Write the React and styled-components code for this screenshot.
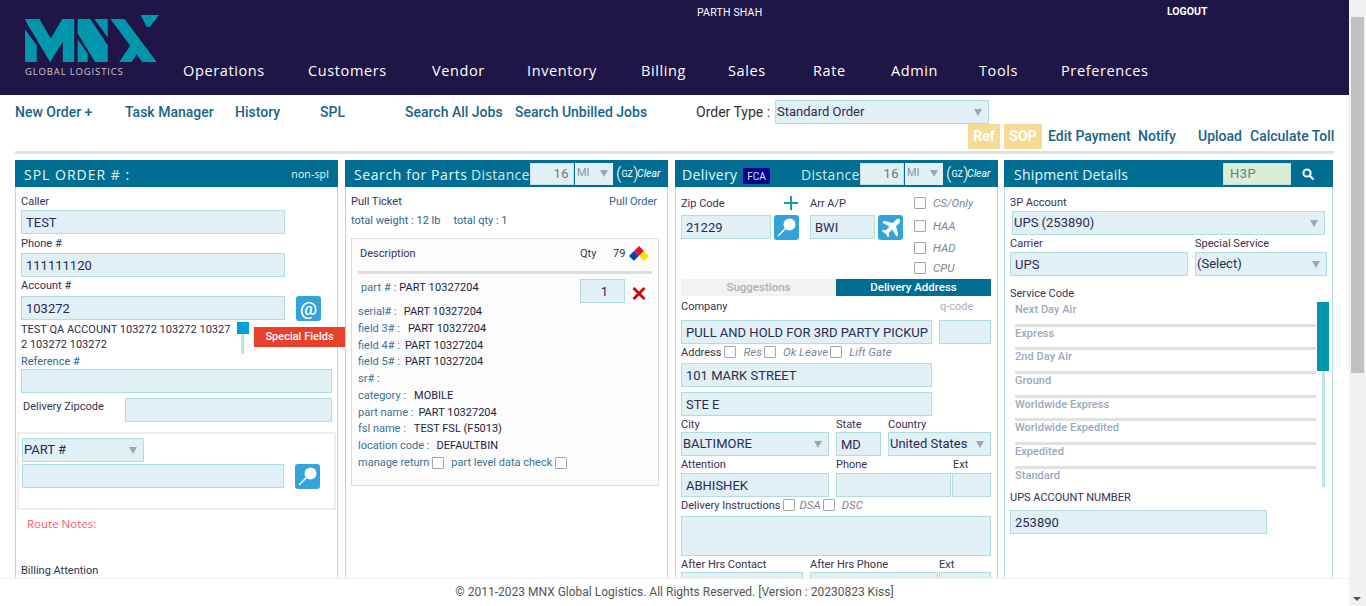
import React from "react";
import styled, { createGlobalStyle } from "styled-components";

const GlobalStyle = createGlobalStyle`
  * { box-sizing: border-box; }
  html, body { margin: 0; padding: 0; height: 606px; overflow: hidden; background: #fff; }
  body { font-family: Roboto, "Liberation Sans", sans-serif; font-size: 12px; color: #2a2a4a; }
`;

const display = `"Open Sans", Roboto, sans-serif`;
const teal = "#006e93";

const Shell = styled.div`
  display: flex;
  width: 1366px;
  height: 606px;
`;

const Page = styled.div`
  width: 1349px;
  height: 606px;
  display: flex;
  flex-direction: column;
  overflow: hidden;
`;

const ScrollBar = styled.div`
  width: 17px;
  height: 606px;
  background: #f1f1f1;
  display: flex;
  flex-direction: column;
  align-items: center;
  padding-top: 17px;
  position: relative;
  &::after {
    content: "";
    position: absolute;
    bottom: 5px;
    left: 4px;
    border-left: 4px solid transparent;
    border-right: 4px solid transparent;
    border-top: 4px solid #505050;
  }
`;

const ScrollThumb = styled.div`
  width: 13px;
  height: 356px;
  background: #c1c1c1;
`;

const Header = styled.header`
  height: 95px;
  flex: none;
  background: #201547;
  display: flex;
  padding-left: 25px;
  color: #fff;
`;

const LogoWrap = styled.div`
  width: 158px;
  padding-top: 15px;
  flex: none;
`;

const LogoCaption = styled.div`
  font-family: ${display};
  font-size: 9.5px;
  line-height: 12px;
  margin-top: 4px;
  letter-spacing: 0.85px;
  color: #c9c9d2;
  white-space: nowrap;
`;

const HeaderRight = styled.div`
  flex: 1;
  display: flex;
  flex-direction: column;
`;

const UserRow = styled.div`
  height: 61px;
  display: flex;
  padding-top: 6px;
  font-size: 10.5px;
  line-height: 12px;
`;

const UserName = styled.span`
  margin-left: 514px;
  margin-top: 1px;
  width: 470px;
  font-weight: 400;
  letter-spacing: 0.2px;
`;

const Logout = styled.span`
  font-weight: 700;
  font-size: 10.5px;
`;

const Nav = styled.nav`
  display: flex;
  font-family: ${display};
  font-size: 14.5px;
  line-height: 20px;
  letter-spacing: 0.62px;
`;

const NavItem = styled.a`
  width: ${(p) => p.$w}px;
  color: #fff;
  white-space: nowrap;
`;

const Toolbar = styled.div`
  height: 59px;
  flex: none;
  margin: 0 15px;
  display: flex;
  flex-direction: column;
`;

const ToolRow = styled.div`
  height: 29px;
  flex: none;
  display: flex;
  align-items: flex-start;
  padding-top: 5px;
`;

const ToolLink = styled.a`
  font-size: 14px;
  font-weight: 500;
  line-height: 24px;
  color: #1a6488;
  white-space: nowrap;
  width: ${(p) => (p.$w ? `${p.$w}px` : "auto")};
`;

const OrderLabel = styled.span`
  font-size: 14px;
  line-height: 24px;
  width: 79px;
  color: #333;
  white-space: nowrap;
`;

const ActionRow = styled.div`
  height: 25px;
  flex: none;
  display: flex;
  justify-content: flex-end;
  align-items: flex-start;
`;

const Tan = styled.span`
  width: ${(p) => p.$w}px;
  height: 25px;
  margin-right: ${(p) => p.$mr}px;
  background: #f5dc96;
  color: #fff;
  font-size: 14px;
  font-weight: 700;
  line-height: 25px;
  text-align: center;
`;

const Rule = styled.div`
  height: 3px;
  margin-top: 2px;
  flex: none;
  background: #e0e0e0;
  width: 1319px;
`;

const Panels = styled.main`
  flex: 1;
  min-height: 0;
  overflow: hidden;
  padding: 6px 0 0 15px;
  display: flex;
  align-items: flex-start;
`;

const Panel = styled.section`
  width: ${(p) => p.$w}px;
  margin-right: ${(p) => p.$mr}px;
  flex: none;
  height: 520px;
  border: 1px solid #b3dbe2;
  border-top: 0;
  position: relative;
`;

const PanelHead = styled.div`
  height: 27px;
  margin: 0 -1px;
  background: ${teal};
  color: #e8f6f8;
  display: flex;
  align-items: center;
  font-family: ${display};
  font-size: 14px;
  white-space: nowrap;
`;

const HeadTitle = styled.span`
  letter-spacing: ${(p) => p.$ls || 0.3}px;
  margin: 2px 0 0 ${(p) => p.$ml}px;
  width: ${(p) => p.$w}px;
  flex: none;
`;

const HeadLabel = styled.span`
  color: #cfe9e6;
  letter-spacing: 0.3px;
  margin-top: 2px;
  width: ${(p) => p.$w}px;
  flex: none;
`;

const NonSpl = styled.span`
  font-size: 10.5px;
  letter-spacing: 0.15px;
  margin-left: auto;
  margin-right: 9px;
`;

const FcaBadge = styled.span`
  width: 27px;
  height: 16px;
  margin-top: 4px;
  background: #00008b;
  color: #d5e6f5;
  font-family: Roboto, sans-serif;
  font-size: 10px;
  line-height: 17px;
  text-align: center;
  margin-right: 31px;
  flex: none;
`;

const HeadInput = styled.input`
  width: ${(p) => p.$w}px;
  height: 22px;
  flex: none;
  border: 1px solid #c4e0e6;
  background: ${(p) => p.$bg || "#e0f0f4"};
  color: #6b7786;
  font: 13px Roboto, sans-serif;
  letter-spacing: 0.4px;
  text-align: ${(p) => p.$align || "right"};
  padding: 0 ${(p) => (p.$align ? 0 : 4)}px 0 ${(p) => (p.$align ? 6 : 0)}px;
  outline: none;
`;

const HeadSelect = styled.div`
  width: 38px;
  height: 22px;
  margin-left: 1px;
  flex: none;
  background: #e0f0f4;
  color: #8a93a5;
  font: 11px/19px Roboto, sans-serif;
  padding-left: 2px;
  position: relative;
  &::after {
    content: "";
    position: absolute;
    right: 5px;
    top: 7px;
    border-left: 4.5px solid transparent;
    border-right: 4.5px solid transparent;
    border-top: 7px solid #9aa8b4;
  }
`;

const Gz = styled.span`
  margin-left: 3px;
  width: 21px;
  flex: none;
  font-size: 9px;
  color: #fff;
  font-family: Roboto, sans-serif;
  display: flex;
  align-items: center;
  justify-content: space-between;
  & b { font-weight: 300; font-size: 17px; line-height: 17px; }
`;

const ClearLink = styled.i`
  font-family: Roboto, sans-serif;
  font-size: 10.5px;
  color: #fff;
`;

const Body = styled.div`
  padding: ${(p) => p.$top || 7}px 5px 0 5px;
`;

const Label = styled.label`
  display: block;
  height: 14px;
  font-size: 11px;
  line-height: 16px;
  white-space: nowrap;
  color: ${(p) => p.$color || "#333350"};
  width: ${(p) => (p.$w ? `${p.$w}px` : "auto")};
  flex: none;
  margin-top: ${(p) => p.$mt || 0}px;
  margin-bottom: ${(p) => p.$mb || 0}px;
  margin-left: ${(p) => p.$ml || 0}px;
`;

const Input = styled.input`
  display: block;
  width: ${(p) => (p.$w ? `${p.$w}px` : "100%")};
  height: ${(p) => p.$h || 24}px;
  flex: none;
  margin-top: ${(p) => p.$mt || 0}px;
  margin-left: ${(p) => p.$ml || 0}px;
  border: 1px solid #b3dbe2;
  background: #e0f0f4;
  border-radius: 0;
  color: #2b2b55;
  font: 13px Roboto, sans-serif;
  text-align: ${(p) => p.$align || "left"};
  padding: 0 0 0 4px;
  outline: none;
`;

const Select = styled.div`
  width: ${(p) => p.$w}px;
  height: 24px;
  flex: none;
  margin-left: ${(p) => p.$ml || 0}px;
  border: 1px solid #b3dbe2;
  background: #e0f0f4;
  color: #2b2b55;
  font-size: 13px;
  line-height: 21px;
  padding-left: 1px;
  position: relative;
  white-space: nowrap;
  &::after {
    content: "";
    position: absolute;
    right: 6px;
    top: 8px;
    border-left: 4px solid transparent;
    border-right: 4px solid transparent;
    border-top: 7px solid #9aa8b4;
  }
`;

const Row = styled.div`
  display: flex;
  align-items: flex-start;
  margin-top: ${(p) => p.$mt || 0}px;
`;

const Col = styled.div`
  width: ${(p) => p.$w}px;
  flex: none;
  display: flex;
  flex-direction: column;
`;

const IconButton = styled.span`
  width: 25px;
  height: 25px;
  flex: none;
  margin-left: ${(p) => p.$ml || 0}px;
  border-radius: 3px;
  background: #33a3dc;
  color: #fff;
  display: flex;
  align-items: center;
  justify-content: center;
  font-size: 19px;
  font-weight: 500;
  line-height: 25px;
`;

const AccountNote = styled.div`
  position: relative;
  height: 30px;
  margin-top: 1px;
  width: 212px;
  font-size: 11px;
  line-height: 15px;
  word-break: break-all;
  color: #2b2b4b;
`;

const SliderThumb = styled.span`
  position: absolute;
  left: 216px;
  top: 0;
  width: 12px;
  height: 12px;
  background: #009fd9;
  &::after {
    content: "";
    position: absolute;
    left: 4px;
    top: 12px;
    width: 3px;
    height: 20px;
    background: #bde3f2;
  }
`;

const SpecialFields = styled.span`
  position: absolute;
  left: 233px;
  top: 5px;
  width: 91px;
  height: 20px;
  background: #e8402a;
  color: #fff;
  font-size: 11px;
  font-weight: 500;
  line-height: 20px;
  text-align: center;
  word-break: normal;
  z-index: 2;
`;

const PartBox = styled.div`
  margin: 10px -4px 0 -4px;
  height: 78px;
  border: 2px solid #eee;
  padding: 4px 3px;
`;

const RouteNotes = styled.div`
  color: #ff5a66;
  font-family: ${display};
  font-size: 11.5px;
  line-height: 14px;
  margin: 7px 0 0 6px;
`;

const PullLine = styled.div`
  display: flex;
  justify-content: space-between;
  height: 14px;
  font-size: 11px;
  line-height: 14px;
  color: #333350;
  margin-right: 5px;
`;

const PullLink = styled.span`
  color: #28678f;
`;

const Totals = styled.div`
  font-size: 11px;
  line-height: 14px;
  margin-top: 5px;
  color: #28678f;
  & span + span { margin-left: 13px; }
`;

const PartCard = styled.div`
  margin-top: 10px;
  margin-right: 3px;
  height: 248px;
  border: 1px solid #ddd;
  background: #fcfcfc;
  padding: 0 6px;
`;

const CardHead = styled.div`
  height: 35px;
  display: flex;
  align-items: flex-start;
  padding: 8px 0 0 2px;
  font-size: 11px;
  line-height: 14px;
  color: #333350;
  border-bottom: 3px solid #ddd;
  & svg { margin-top: -1px; }
`;

const CardCell = styled.span`
  width: ${(p) => p.$w}px;
  flex: none;
`;

const PartHead = styled.div`
  display: flex;
  align-items: flex-start;
  height: 30px;
  padding-top: 5px;
  font-size: 11px;
`;

const PartName = styled.span`
  width: 222px;
  padding: 2px 0 0 3px;
  flex: none;
  line-height: 14px;
  letter-spacing: 0.1px;
`;

const RemoveMark = styled.span`
  margin: 8px 0 0 7px;
  display: flex;
`;

const Key = styled.span`
  color: #3a7396;
  margin-left: ${(p) => p.$ml || 0}px;
`;

const Value = styled.span`
  color: #1d1d3d;
  margin-left: ${(p) => p.$ml ?? 4}px;
`;

const PartRow = styled.div`
  height: 16.75px;
  font-size: 11px;
  line-height: 16.75px;
  white-space: nowrap;
  display: flex;
  align-items: center;
`;

const Check = styled.input.attrs({ type: "checkbox", readOnly: true })`
  appearance: none;
  width: 12px;
  height: 12px;
  flex: none;
  margin: 0 0 0 ${(p) => p.$ml || 0}px;
  border: 1px solid #a5a5a5;
  border-radius: 1px;
  background: #fff;
`;

const Opt = styled.i`
  color: #7d8595;
  font-size: 11.5px;
  margin-left: ${(p) => p.$ml || 0}px;
  white-space: nowrap;
`;

const Stack = styled.div`
  display: flex;
  flex-direction: column;
  width: 78px;
  flex: none;
`;

const CheckLine = styled.div`
  display: flex;
  align-items: center;
  height: ${(p) => p.$h}px;
  margin-top: ${(p) => p.$mt || 0}px;
  & i { margin-left: 7px; }
`;

const Tabs = styled.div`
  display: grid;
  grid-template-columns: 155px 155px;
  height: 17px;
  margin-top: 2px;
`;

const Tab = styled.div`
  background: ${(p) => (p.$active ? teal : "#f2f2f2")};
  color: ${(p) => (p.$active ? "#fff" : "#aab0b8")};
  font-size: 11.5px;
  font-weight: 500;
  line-height: 17px;
  text-align: center;
`;

const InlineLine = styled.div`
  display: flex;
  align-items: center;
  height: 14px;
  font-size: 11px;
  color: #333350;
  margin-top: ${(p) => p.$mt || 0}px;
  white-space: nowrap;
`;

const ServiceList = styled.div`
  width: 301px;
  margin-left: 5px;
  padding-top: 1px;
  height: 185px;
  overflow: hidden;
`;

const ServiceItem = styled.div`
  height: 23.7px;
  border-bottom: 3px solid #e0e0e0;
  color: #9aa9c0;
  font-size: 11px;
  font-weight: 500;
  letter-spacing: 0.05px;
  line-height: 14px;
  &:last-child { border-bottom: 0; }
`;

const ListWrap = styled.div`
  position: relative;
  margin-top: 2px;
`;

const ListTrack = styled.span`
  position: absolute;
  left: 312px;
  top: 0;
  width: 3px;
  height: 185px;
  background: #bde3f2;
`;

const ListThumb = styled.span`
  position: absolute;
  left: 307px;
  top: 0;
  width: 12px;
  height: 69px;
  background: #0097ad;
`;

const SearchSlot = styled.span`
  margin-left: 11px;
  display: flex;
`;

const Footer = styled.footer`
  height: 28px;
  flex: none;
  background: #fff;
  border-top: 1px solid #eef0f4;
  text-align: center;
  font-size: 12px;
  line-height: 26px;
  color: #555;
`;

const MagnifierIcon = () => (
  <svg width="21" height="21" viewBox="0 0 21 21">
    <circle cx="13.5" cy="7.5" r="6" fill="#fff" />
    <path d="M9 12 L2.5 18.5" stroke="#fff" strokeWidth="1.5" strokeLinecap="round" />
  </svg>
);

const PlaneIcon = () => (
  <svg width="22" height="22" viewBox="0 0 24 24">
    <path
      fill="#fff"
      d="M21.5 2.5c-1-1-2.9-.7-4 .4l-3.6 3.6L4.4 4 2.5 5.9l7.9 4.7-3.9 3.9-3-.5L2 15.5l4 2.5 2.5 4 1.5-1.5-.5-3 3.9-3.9 4.7 7.9L20 19.6l-2.5-9.5 3.6-3.6c1.1-1.1 1.4-3 .4-4z"
    />
  </svg>
);

const SearchGlyph = () => (
  <svg width="12" height="12" viewBox="0 0 12 12">
    <circle cx="5" cy="5" r="3.6" fill="none" stroke="#fff" strokeWidth="2" />
    <path d="M7.8 7.8 L11 11" stroke="#fff" strokeWidth="2.2" strokeLinecap="round" />
  </svg>
);

const HazardIcon = () => (
  <svg width="20" height="20" viewBox="0 0 20 20">
    <path d="M10 0 L15 5 L10 10 L5 5 Z" fill="#e8112d" />
    <path d="M5 5 L10 10 L5 15 L0 10 Z" fill="#0047ab" />
    <path d="M15 5 L20 10 L15 15 L10 10 Z" fill="#ffe000" />
    <path d="M10 10 L15 15 L10 20 L5 15 Z" fill="#fff" stroke="#ddd" strokeWidth="0.5" />
  </svg>
);

const RedX = () => (
  <svg width="14" height="13" viewBox="0 0 14 13">
    <path d="M1.5 1 L12.5 12 M12.5 1 L1.5 12" stroke="#c40d0d" strokeWidth="2.8" />
  </svg>
);

const PlusIcon = () => (
  <svg width="14" height="14" viewBox="0 0 14 14">
    <path d="M7 0 V14 M0 7 H14" stroke="#169aa6" strokeWidth="2" />
  </svg>
);

// logo mark, coords are the 3x crop of the picture
const MnxLogo = () => (
  <svg width="134" height="47" viewBox="75 45 400 140" style={{ display: "block" }}>
    <g fill="#0097ad">
      <path d="M75 88 L110 135 V185 H75 Z" />
      <path d="M75 57 H118 L152 115 L186 57 H222 V185 H188 V125 L150 185 L82 72 Z" />
      <path d="M232 57 H270 L322 135 V185 H284 L232 100 Z" />
      <path d="M232 118 L262 160 V185 H232 Z" />
      <path d="M282 57 H322 V112 Z" />
      <path d="M330 57 H372 L468 185 H425 Z" />
      <path d="M356 185 L392 132 L412 155 L394 185 Z" />
      <path d="M420 45 H475 L448 80 H438 Z" />
    </g>
  </svg>
);

const Logo = () => (
  <LogoWrap>
    <MnxLogo />
    <LogoCaption>GLOBAL LOGISTICS</LogoCaption>
  </LogoWrap>
);

const navItems = [
  ["Operations", 125],
  ["Customers", 124],
  ["Vendor", 95],
  ["Inventory", 114],
  ["Billing", 87],
  ["Sales", 85],
  ["Rate", 78],
  ["Admin", 88],
  ["Tools", 82],
  ["Preferences", 100],
];

const partRows = [
  ["serial# :", "PART 10327204", 7],
  ["field 3# :", "PART 10327204", 8],
  ["field 4# :", "PART 10327204", 5],
  ["field 5# :", "PART 10327204", 5],
  ["sr# :", "", 0],
  ["category :", "MOBILE", 8],
  ["part name :", "PART 10327204", 5],
  ["fsl name :", "TEST FSL (F5013)", 8],
  ["location code :", "DEFAULTBIN", 7],
];

const services = [
  "Next Day Air",
  "Express",
  "2nd Day Air",
  "Ground",
  "Worldwide Express",
  "Worldwide Expedited",
  "Expedited",
  "Standard",
];

const Distance = () => (
  <>
    <HeadLabel $w={59}>Distance</HeadLabel>
    <HeadInput $w={44} defaultValue="16" readOnly />
    <HeadSelect>MI</HeadSelect>
    <Gz>
      <b>(</b>GZ<b>)</b>
    </Gz>
    <ClearLink>Clear</ClearLink>
  </>
);

const OrderPanel = () => (
  <Panel $w={323} $mr={7}>
    <PanelHead>
      <HeadTitle $ml={9} $w={130} $ls={1}>
        SPL ORDER # :
      </HeadTitle>
      <NonSpl>non-spl</NonSpl>
    </PanelHead>
    <Body>
      <Label $mb={2}>Caller</Label>
      <Input $w={264} defaultValue="TEST" readOnly />
      <Label $mt={2} $mb={3}>
        Phone #
      </Label>
      <Input $w={264} defaultValue="111111120" readOnly />
      <Label $mt={1} $mb={4}>
        Account #
      </Label>
      <Row>
        <Input $w={264} defaultValue="103272" readOnly />
        <IconButton $ml={11}>@</IconButton>
      </Row>
      <AccountNote>
        TEST QA ACCOUNT 103272 103272 103272 103272 103272
        <SliderThumb />
        <SpecialFields>Special Fields</SpecialFields>
      </AccountNote>
      <Label $mt={2} $mb={1} $color="#28678f">
        Reference #
      </Label>
      <Input $w={311} defaultValue="" readOnly />
      <Row $mt={5}>
        <Label $ml={2} $mt={1} $w={102}>
          Delivery Zipcode
        </Label>
        <Input $w={207} defaultValue="" readOnly />
      </Row>
      <PartBox>
        <Select $w={122}>PART #</Select>
        <Row $mt={2}>
          <Input $w={262} defaultValue="" readOnly />
          <IconButton $ml={11}>
            <MagnifierIcon />
          </IconButton>
        </Row>
      </PartBox>
      <RouteNotes>Route Notes:</RouteNotes>
      <Label $mt={32}>Billing Attention</Label>
    </Body>
  </Panel>
);

const PartsPanel = () => (
  <Panel $w={323} $mr={7}>
    <PanelHead>
      <HeadTitle $ml={9} $w={117} $ls={0.6}>
        Search for Parts
      </HeadTitle>
      <Distance />
    </PanelHead>
    <Body $top={8}>
      <PullLine>
        <span>Pull Ticket</span>
        <PullLink>Pull Order</PullLink>
      </PullLine>
      <Totals>
        <span>total weight : 12 lb</span>
        <span>total qty : 1</span>
      </Totals>
      <PartCard>
        <CardHead>
          <CardCell $w={220}>Description</CardCell>
          <CardCell $w={33}>Qty</CardCell>
          <CardCell $w={16}>79</CardCell>
          <HazardIcon />
        </CardHead>
        <PartHead>
          <PartName>
            <Key>part # :</Key> <Value $ml={0}>PART 10327204</Value>
          </PartName>
          <Input $w={45} $align="center" defaultValue="1" readOnly />
          <RemoveMark>
            <RedX />
          </RemoveMark>
        </PartHead>
        {partRows.map(([k, v, ml]) => (
          <PartRow key={k}>
            <Key>{k}</Key>
            <Value $ml={ml}>{v}</Value>
          </PartRow>
        ))}
        <PartRow>
          <Key>manage return</Key>
          <Check $ml={3} />
          <Key $ml={7}>part level data check</Key>
          <Check $ml={3} />
        </PartRow>
      </PartCard>
    </Body>
  </Panel>
);

const DeliveryPanel = () => (
  <Panel $w={323} $mr={6}>
    <PanelHead>
      <HeadTitle $ml={7} $w={61} $ls={0.35}>
        Delivery
      </HeadTitle>
      <FcaBadge>FCA</FcaBadge>
      <Distance />
    </PanelHead>
    <Body $top={9}>
      <Row>
        <Col $w={129}>
          <Row>
            <Label $w={103}>Zip Code</Label>
            <PlusIcon />
          </Row>
          <Row $mt={5}>
            <Input $w={90} defaultValue="21229" readOnly />
            <IconButton $ml={3}>
              <MagnifierIcon />
            </IconButton>
          </Row>
        </Col>
        <Col $w={104}>
          <Label>Arr A/P</Label>
          <Row $mt={5}>
            <Input $w={65} defaultValue="BWI" readOnly />
            <IconButton $ml={3}>
              <PlaneIcon />
            </IconButton>
          </Row>
        </Col>
        <Stack>
          <CheckLine $h={14}>
            <Check />
            <Opt>CS/Only</Opt>
          </CheckLine>
          <CheckLine $h={22} $mt={5}>
            <Check />
            <Opt>HAA</Opt>
          </CheckLine>
          <CheckLine $h={22}>
            <Check />
            <Opt>HAD</Opt>
          </CheckLine>
          <CheckLine $h={18}>
            <Check />
            <Opt>CPU</Opt>
          </CheckLine>
        </Stack>
      </Row>
      <Tabs>
        <Tab>Suggestions</Tab>
        <Tab $active>Delivery Address</Tab>
      </Tabs>
      <Row $mt={3}>
        <Label $w={259}>Company</Label>
        <Label $color="#a9b0b8">q-code</Label>
      </Row>
      <Row $mt={7}>
        <Input $w={251} defaultValue="PULL AND HOLD FOR 3RD PARTY PICKUP" readOnly />
        <Input $w={52} $ml={7} defaultValue="" readOnly />
      </Row>
      <InlineLine $mt={1}>
        Address
        <Check $ml={3} />
        <Opt $ml={7}>Res</Opt>
        <Check $ml={2} />
        <Opt $ml={7}>Ok Leave</Opt>
        <Check $ml={2} />
        <Opt $ml={7}>Lift Gate</Opt>
      </InlineLine>
      <Input $w={251} $mt={4} defaultValue="101 MARK STREET" readOnly />
      <Input $w={251} $mt={5} defaultValue="STE E" readOnly />
      <Row $mt={1}>
        <Col $w={155}>
          <Label $mb={1}>City</Label>
          <Select $w={148}>BALTIMORE</Select>
        </Col>
        <Col $w={52}>
          <Label $mb={1}>State</Label>
          <Input $w={45} defaultValue="MD" readOnly />
        </Col>
        <Col $w={103}>
          <Label $mb={1}>Country</Label>
          <Select $w={103}>United States</Select>
        </Col>
      </Row>
      <Row $mt={1}>
        <Col $w={155}>
          <Label $mb={2}>Attention</Label>
          <Input $w={148} defaultValue="ABHISHEK" readOnly />
        </Col>
        <Col $w={116}>
          <Label $mb={2}>Phone</Label>
          <Input $w={115} defaultValue="" readOnly />
        </Col>
        <Col $w={39}>
          <Label $mb={2} $ml={1}>
            Ext
          </Label>
          <Input $w={39} defaultValue="" readOnly />
        </Col>
      </Row>
      <InlineLine $mt={1}>
        Delivery Instructions
        <Check $ml={3} />
        <Opt $ml={4}>DSA</Opt>
        <Check $ml={2} />
        <Opt $ml={7}>DSC</Opt>
      </InlineLine>
      <Input $w={310} $h={40} $mt={4} defaultValue="" readOnly />
      <Row $mt={1}>
        <Col $w={129}>
          <Label $mb={1}>After Hrs Contact</Label>
          <Input $w={122} defaultValue="" readOnly />
        </Col>
        <Col $w={129}>
          <Label $mb={1}>After Hrs Phone</Label>
          <Input $w={128} defaultValue="" readOnly />
        </Col>
        <Col $w={52}>
          <Label $mb={1}>Ext</Label>
          <Input $w={52} defaultValue="" readOnly />
        </Col>
      </Row>
    </Body>
  </Panel>
);

const ShipmentPanel = () => (
  <Panel $w={329} $mr={0}>
    <PanelHead>
      <HeadTitle $ml={10} $w={209} $ls={0.2}>
        Shipment Details
      </HeadTitle>
      <HeadInput $w={68} $bg="#d8efd5" $align="left" defaultValue="H3P" readOnly />
      <SearchSlot>
        <SearchGlyph />
      </SearchSlot>
    </PanelHead>
    <Body $top={8}>
      <Label $mb={2}>3P Account</Label>
      <Select $w={313} $ml={2}>
        UPS (253890)
      </Select>
      <Row $mt={1}>
        <Col $w={185}>
          <Label $mb={2}>Carrier</Label>
          <Input $w={178} defaultValue="UPS" readOnly />
        </Col>
        <Col $w={132}>
          <Label $mb={2}>Special Service</Label>
          <Select $w={132}>(Select)</Select>
        </Col>
      </Row>
      <Label $mt={10}>Service Code</Label>
      <ListWrap>
        <ServiceList>
          {services.map((s) => (
            <ServiceItem key={s}>{s}</ServiceItem>
          ))}
        </ServiceList>
        <ListTrack />
        <ListThumb />
      </ListWrap>
      <Label $mt={3} $mb={6}>
        UPS ACCOUNT NUMBER
      </Label>
      <Input $w={257} defaultValue="253890" readOnly />
    </Body>
  </Panel>
);

export default function App() {
  return (
    <Shell>
      <GlobalStyle />
      <Page>
        <Header>
          <Logo />
          <HeaderRight>
            <UserRow>
              <UserName>PARTH SHAH</UserName>
              <Logout>LOGOUT</Logout>
            </UserRow>
            <Nav>
              {navItems.map(([name, w]) => (
                <NavItem key={name} $w={w}>
                  {name}
                </NavItem>
              ))}
            </Nav>
          </HeaderRight>
        </Header>
        <Toolbar>
          <ToolRow>
            <ToolLink $w={110}>New Order +</ToolLink>
            <ToolLink $w={110}>Task Manager</ToolLink>
            <ToolLink $w={85}>History</ToolLink>
            <ToolLink $w={85}>SPL</ToolLink>
            <ToolLink $w={110}>Search All Jobs</ToolLink>
            <ToolLink $w={181}>Search Unbilled Jobs</ToolLink>
            <OrderLabel>Order Type :</OrderLabel>
            <Select $w={214}>Standard Order</Select>
          </ToolRow>
          <ActionRow>
            <Tan $w={32} $mr={4}>
              Ref
            </Tan>
            <Tan $w={38} $mr={6}>
              SOP
            </Tan>
            <ToolLink $w={90}>Edit Payment</ToolLink>
            <ToolLink $w={60}>Notify</ToolLink>
            <ToolLink $w={52}>Upload</ToolLink>
            <ToolLink $w={84}>Calculate Toll</ToolLink>
          </ActionRow>
          <Rule />
        </Toolbar>
        <Panels>
          <OrderPanel />
          <PartsPanel />
          <DeliveryPanel />
          <ShipmentPanel />
        </Panels>
        <Footer>© 2011-2023 MNX Global Logistics. All Rights Reserved. [Version : 20230823 Kiss]</Footer>
      </Page>
      <ScrollBar>
        <ScrollThumb />
      </ScrollBar>
    </Shell>
  );
}
